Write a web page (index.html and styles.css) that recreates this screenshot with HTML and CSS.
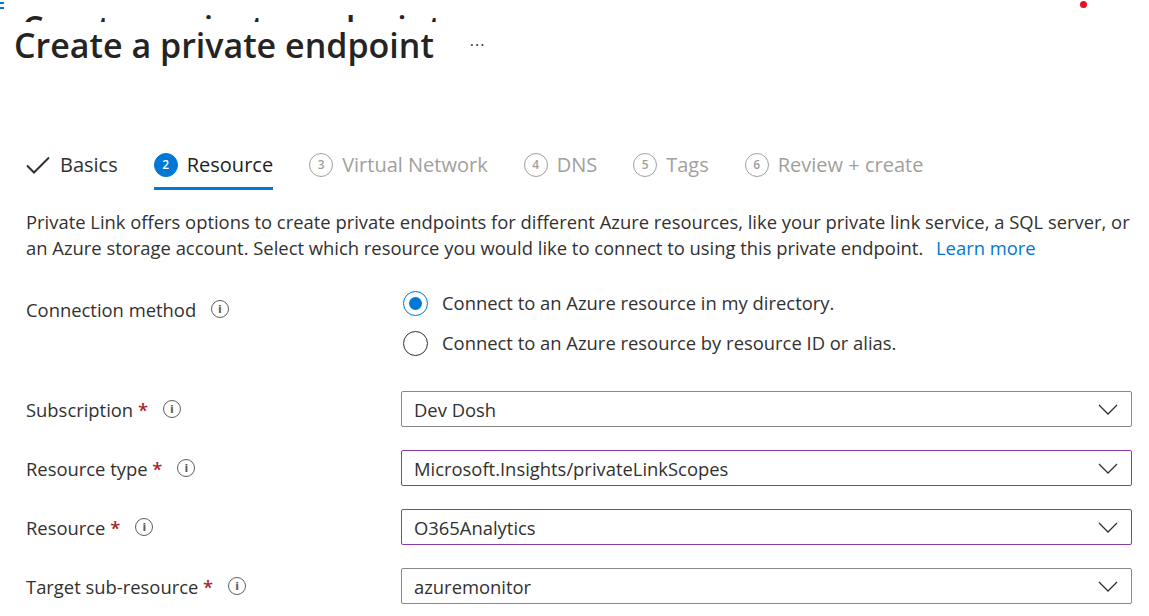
FILE: index.html
```html
<!DOCTYPE html>
<html lang="en">
<head>
<meta charset="utf-8">
<title>Create a private endpoint</title>
<link rel="stylesheet" href="styles.css">
</head>
<body>
<div class="page">
  <span class="corner-glyph"></span>
  <span class="notify-dot"></span>
  <div class="ghost"><div class="ghost-title">Create a private endpoint</div></div>
  <div class="title-row">
    <h1 class="title">Create a private endpoint</h1>
    <span class="more">···</span>
  </div>

  <nav class="tabs">
    <div class="tab done">
      <svg class="check" width="24" height="20" viewBox="0 0 24 20"><path d="M1 10.5 L8 17.5 L23 2.5" fill="none" stroke="#323130" stroke-width="2"/></svg>
      <span>Basics</span>
    </div>
    <div class="tab active">
      <span class="step">2</span>
      <span>Resource</span>
    </div>
    <div class="tab">
      <span class="step">3</span>
      <span>Virtual Network</span>
    </div>
    <div class="tab">
      <span class="step">4</span>
      <span>DNS</span>
    </div>
    <div class="tab">
      <span class="step">5</span>
      <span>Tags</span>
    </div>
    <div class="tab">
      <span class="step">6</span>
      <span>Review + create</span>
    </div>
  </nav>

  <p class="desc">Private Link offers options to create private endpoints for different Azure resources, like your private link service, a SQL server, or an Azure storage account. Select which resource you would like to connect to using this private endpoint. <a href="#" class="link">Learn more</a></p>

  <div class="form">
    <div class="label conn-label">Connection method <span class="info">i</span></div>
    <div class="radios">
      <label class="radio"><span class="dot checked"></span>Connect to an Azure resource in my directory.</label>
      <label class="radio"><span class="dot"></span>Connect to an Azure resource by resource ID or alias.</label>
    </div>

    <div class="label">Subscription <span class="req">*</span> <span class="info">i</span></div>
    <div class="select">Dev Dosh<svg class="chev" width="20" height="11" viewBox="0 0 20 11"><path d="M1 1 L10 10 L19 1" fill="none" stroke="#323130" stroke-width="1.3"/></svg></div>

    <div class="label">Resource type <span class="req">*</span> <span class="info">i</span></div>
    <div class="select focus">Microsoft.Insights/privateLinkScopes<svg class="chev" width="20" height="11" viewBox="0 0 20 11"><path d="M1 1 L10 10 L19 1" fill="none" stroke="#323130" stroke-width="1.3"/></svg></div>

    <div class="label">Resource <span class="req">*</span> <span class="info">i</span></div>
    <div class="select focus">O365Analytics<svg class="chev" width="20" height="11" viewBox="0 0 20 11"><path d="M1 1 L10 10 L19 1" fill="none" stroke="#323130" stroke-width="1.3"/></svg></div>

    <div class="label">Target sub-resource <span class="req">*</span> <span class="info">i</span></div>
    <div class="select">azuremonitor<svg class="chev" width="20" height="11" viewBox="0 0 20 11"><path d="M1 1 L10 10 L19 1" fill="none" stroke="#323130" stroke-width="1.3"/></svg></div>
  </div>
</div>
</body>
</html>
```

FILE: styles.css
```css
* { box-sizing: border-box; }
html, body { margin: 0; padding: 0; background: #fff; }
body {
  font-family: "Open Sans", "Noto Sans", "Liberation Sans", sans-serif;
  color: #323130;
  overflow: hidden;
}
.page { position: relative; width: 1149px; height: 616px; }

.corner-glyph {
  position: absolute; left: 0; top: 2px; width: 4px; height: 7px;
  border-top: 2px solid #0078d4; border-bottom: 2px solid #0078d4;
}
.notify-dot {
  position: absolute; left: 1080px; top: 1px; width: 7px; height: 7px;
  border-radius: 50%; background: #e81123;
}

.ghost { height: 22px; overflow: hidden; padding: 8px 0 0 22px; }
.ghost-title, .title {
  font-size: 34px; font-weight: 600; line-height: 40px; color: #252423; margin: 0;
}
.title-row { display: flex; align-items: center; padding-left: 14px; margin-top: 3px; height: 40px; }
.more { margin-left: 36px; font-size: 16px; color: #323130; letter-spacing: 1px; }

.tabs { display: flex; gap: 36px; padding-left: 26px; margin-top: 88px; }
.tab {
  display: flex; align-items: center; gap: 9px;
  font-size: 20px; line-height: 24px; color: #a19f9d;
  padding-bottom: 10px; border-bottom: 3px solid transparent;
}
.tab.done { color: #323130; gap: 10px; }
.tab.active { color: #201f1e; font-weight: 500; border-bottom-color: #0078d4; }
.step {
  width: 24px; height: 24px; border-radius: 50%;
  border: 1.5px solid #a19f9d; color: #a19f9d;
  display: inline-flex; align-items: center; justify-content: center;
  font-size: 12px; font-weight: 600; line-height: 1;
}
.tab.active .step { background: #0078d4; border-color: #0078d4; color: #fff; }

.desc {
  margin: 19px 0 0 26px; width: 1108px;
  font-size: 18.4px; line-height: 26px; color: #323130;
}
.link { color: #0078d4; text-decoration: none; margin-left: 8px; }

.form {
  display: grid; grid-template-columns: 375px 731px;
  margin: 29px 0 0 26px; row-gap: 23px;
}
.label { font-size: 18.4px; display: flex; align-items: center; height: 36px; white-space: pre; }
.conn-label { height: 26px; margin-top: 6px; }
.req { color: #a4262c; font-weight: 600; margin-right: 5px; }
.info {
  width: 18px; height: 18px; border-radius: 50%; border: 1.3px solid #605e5c;
  color: #605e5c; font-size: 11px; font-weight: 600; line-height: 1;
  display: inline-flex; align-items: center; justify-content: center;
  margin-left: 10px; font-family: "DejaVu Sans", sans-serif;
}
.radios { display: flex; flex-direction: column; gap: 14px; padding-left: 2px; margin-bottom: 12px; }
.radio { display: flex; align-items: center; gap: 14px; font-size: 18.4px; line-height: 26px; color: #323130; }
.dot {
  width: 25px; height: 25px; border-radius: 50%; border: 1.5px solid #323130;
  display: inline-flex; align-items: center; justify-content: center; flex: none;
}
.dot.checked { border-color: #0078d4; }
.dot.checked::after { content: ""; width: 13px; height: 13px; border-radius: 50%; background: #0078d4; }

.select {
  height: 36px; border: 1px solid #8a8886; border-radius: 2px;
  display: flex; align-items: center; justify-content: space-between;
  padding: 0 13px 0 12px; font-size: 18.4px; color: #323130;
}
.select.focus { border-color: #8b3aab; }
.chev { flex: none; }
```
